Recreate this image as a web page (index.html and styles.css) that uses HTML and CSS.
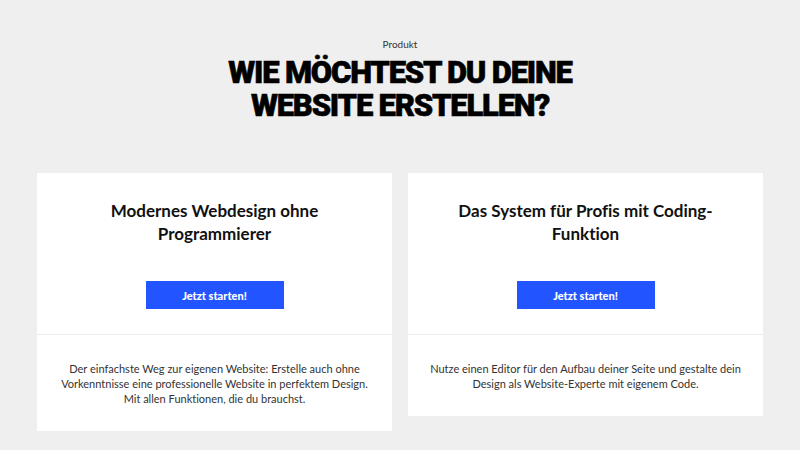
FILE: index.html
```html
<!DOCTYPE html>
<html lang="de">
<head>
<meta charset="utf-8">
<title>Produkt</title>
<link rel="stylesheet" href="styles.css">
</head>
<body>
<main class="page">
  <header class="intro">
    <p class="eyebrow">Produkt</p>
    <h1 class="headline">WIE MÖCHTEST DU DEINE<br>WEBSITE ERSTELLEN?</h1>
  </header>
  <section class="cards">
    <article class="card">
      <div class="card-top">
        <h2 class="card-title">Modernes Webdesign ohne<br>Programmierer</h2>
        <a class="btn" href="#">Jetzt starten!</a>
      </div>
      <div class="card-bottom">
        <p class="card-text">Der einfachste Weg zur eigenen Website: Erstelle auch ohne<br>Vorkenntnisse eine professionelle Website in perfektem Design.<br>Mit allen Funktionen, die du brauchst.</p>
      </div>
    </article>
    <article class="card">
      <div class="card-top">
        <h2 class="card-title">Das System für Profis mit Coding-<br>Funktion</h2>
        <a class="btn" href="#">Jetzt starten!</a>
      </div>
      <div class="card-bottom">
        <p class="card-text">Nutze einen Editor für den Aufbau deiner Seite und gestalte dein<br>Design als Website-Experte mit eigenem Code.</p>
      </div>
    </article>
  </section>
</main>
</body>
</html>
```
FILE: styles.css
```css
* { box-sizing: border-box; }
html, body { margin: 0; padding: 0; }
body {
  background: #efefef;
  font-family: Lato, "Noto Sans", sans-serif;
  font-variant-ligatures: no-common-ligatures;
  color: #111;
  width: 800px;
  height: 450px;
  overflow: hidden;
}
.page {
  display: flex;
  flex-direction: column;
  align-items: center;
  padding-top: 37px;
}
.intro {
  display: flex;
  flex-direction: column;
  align-items: center;
  text-align: center;
}
.eyebrow {
  margin: 0;
  font-size: 10px;
  line-height: 14px;
  color: #333;
}
.headline {
  margin: 5px 0 0;
  font-family: Roboto, Inter, sans-serif;
  font-size: 31px;
  line-height: 33px;
  font-weight: 900;
  letter-spacing: -1.2px;
  -webkit-text-stroke: 0.6px #000;
  color: #000;
}
.cards {
  margin-top: 51px;
  display: grid;
  grid-template-columns: 355px 355px;
  gap: 16px;
  align-items: start;
}
.card {
  background: #fff;
  display: flex;
  flex-direction: column;
}
.card-top {
  display: flex;
  flex-direction: column;
  align-items: center;
  padding: 26px 10px 25px;
  border-bottom: 1px solid #ececec;
}
.card-title {
  margin: 0;
  font-size: 17px;
  line-height: 23px;
  font-weight: 700;
  text-align: center;
  color: #111;
}
.btn {
  margin-top: 36px;
  width: 138px;
  height: 28px;
  display: flex;
  align-items: center;
  justify-content: center;
  background: #2255ff;
  color: #fff;
  font-size: 11px;
  font-weight: 900;
  text-decoration: none;
}
.card-bottom {
  padding: 26px 10px 25px;
}
.card-text {
  margin: 0;
  font-size: 11px;
  line-height: 15px;
  text-align: center;
  color: #333;
}
```
